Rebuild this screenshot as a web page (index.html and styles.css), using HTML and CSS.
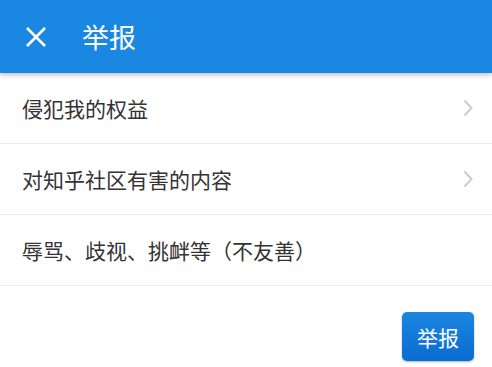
FILE: index.html
```html
<!DOCTYPE html>
<html lang="zh">
<head>
<meta charset="utf-8">
<link rel="stylesheet" href="styles.css">
</head>
<body>
<header class="bar">
  <svg class="close" width="22" height="22" viewBox="0 0 22 22"><path d="M2 2 L20 20 M20 2 L2 20" stroke="#fff" stroke-width="2.6" fill="none"/></svg>
  <h1 class="title">举报</h1>
</header>
<ul class="list">
  <li class="row"><span>侵犯我的权益</span><svg class="chev" width="10" height="18" viewBox="0 0 10 18"><path d="M1.5 1.5 L8.5 9 L1.5 16.5" stroke="#cccccc" stroke-width="2" fill="none"/></svg></li>
  <li class="row"><span>对知乎社区有害的内容</span><svg class="chev" width="10" height="18" viewBox="0 0 10 18"><path d="M1.5 1.5 L8.5 9 L1.5 16.5" stroke="#cccccc" stroke-width="2" fill="none"/></svg></li>
  <li class="row"><span>辱骂、歧视、挑衅等（不友善）</span></li>
</ul>
<div class="actions"><button class="btn">举报</button></div>
</body>
</html>
```
FILE: styles.css
```css
html, body { margin: 0; padding: 0; background: #fff; }
body { font-family: "Noto Sans CJK SC", "Noto Sans", sans-serif; width: 492px; height: 367px; overflow: hidden; }
.bar {
  height: 73px; background: #1a88e2; display: flex; align-items: center;
  padding-left: 25px; box-shadow: 0 2px 5px rgba(0,0,0,0.25); position: relative; z-index: 1;
}
.close { display: block; }
.title { margin: 0 0 0 35px; font-size: 27px; font-weight: 400; color: #fff; line-height: 1; }
.list { list-style: none; margin: 0; padding: 0; }
.row {
  height: 70px; border-bottom: 1px solid #ebebeb; display: flex; align-items: center;
  justify-content: space-between; padding: 0 19px 0 22px; font-size: 21px; color: #333;
}
.actions { display: flex; justify-content: flex-end; padding: 26px 18px 0 0; }
.btn {
  width: 72px; height: 49px; border: none; border-radius: 5px; color: #fff; font-size: 21px;
  font-family: inherit; background: linear-gradient(#1b86e2, #0a6cd0);
  box-shadow: 0 1px 2px rgba(0,0,0,0.3);
}
```
